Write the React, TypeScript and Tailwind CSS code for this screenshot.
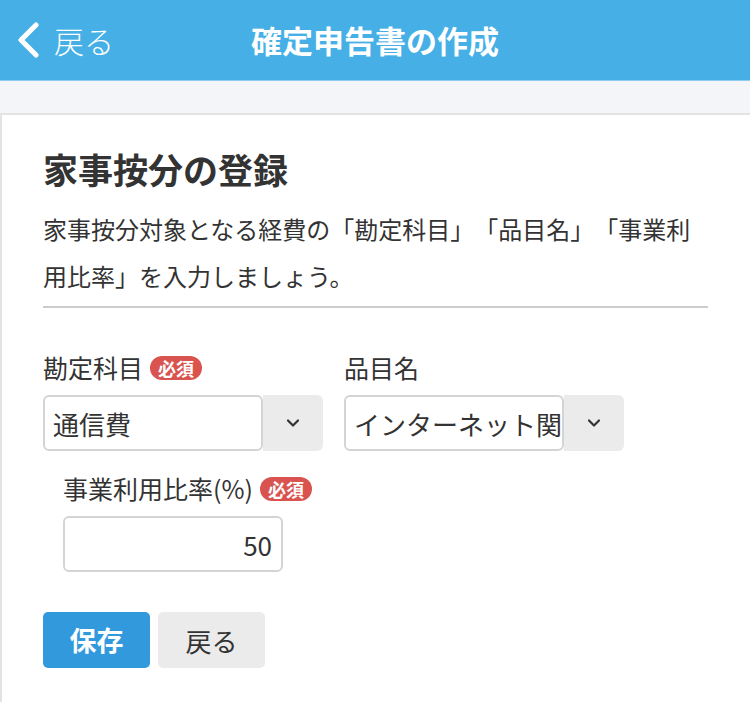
import React from "react";

const Badge: React.FC = () => (
  <span className="ml-[7px] inline-flex h-[24px] items-center rounded-full bg-[#d9534f] px-[8px] text-[18px] font-bold leading-none text-white">
    必須
  </span>
);

const Chevron: React.FC = () => (
  <svg width="16" height="10" viewBox="0 0 16 10" fill="none">
    <path d="M3 2.5 L8 7.5 L13 2.5" stroke="#333" strokeWidth="2.2" strokeLinecap="round" strokeLinejoin="round" />
  </svg>
);

const SelectBox: React.FC<{ value: string }> = ({ value }) => (
  <div className="flex h-[56px] w-[280px]">
    <div className="flex w-[220px] items-center overflow-hidden whitespace-nowrap rounded-[6px] border-2 border-[#d4d4d4] bg-white pl-[8px] text-[26px] text-[#333]">
      {value}
    </div>
    <div className="flex w-[60px] items-center justify-center rounded-r-[6px] bg-[#ebebeb]">
      <Chevron />
    </div>
  </div>
);

export default function App() {
  return (
    <div
      className="min-h-[702px] w-[750px] bg-[#f3f5f8] text-[#333] [text-spacing-trim:space-all]"
      style={{ fontFamily: '"Noto Sans CJK JP", "Noto Sans", sans-serif' }}
    >
      <header className="relative flex h-[81px] items-center justify-center border-b border-[#8cccee] bg-[#46b0e6]">
        <div className="absolute left-[14px] top-0 flex h-full items-center gap-[12px] text-white">
          <svg width="28" height="36" viewBox="0 0 28 36" fill="none">
            <path d="M22 3 L7 18 L22 33" stroke="white" strokeWidth="5" strokeLinecap="round" strokeLinejoin="round" />
          </svg>
          <span className="text-[30px] font-light">戻る</span>
        </div>
        <h1 className="text-[31px] font-bold text-white">確定申告書の作成</h1>
      </header>

      <div className="h-[32px]" />

      <main className="border-l-2 border-t-2 border-[#e3e3e3] bg-white px-[41px] pb-[34px] pt-[30px]">
        <h2 className="text-[35px] font-bold leading-[48px] text-[#333]">家事按分の登録</h2>
        <p className="mt-[12px] w-[665px] text-[24px] leading-[47px] text-[#333]">
          家事按分対象となる経費の「勘定科目」「品目名」「事業利用比率」を入力しましょう。
        </p>
        <div className="mt-[7px] h-[2px] w-[665px] bg-[#cccccc]" />

        <div className="mt-[41px] flex gap-[21px]">
          <div className="flex flex-col">
            <div className="flex h-[38px] items-center text-[25px]">
              勘定科目
              <Badge />
            </div>
            <div className="mt-[8px]">
              <SelectBox value="通信費" />
            </div>
          </div>
          <div className="flex flex-col">
            <div className="flex h-[38px] items-center text-[25px]">品目名</div>
            <div className="mt-[8px]">
              <SelectBox value="インターネット関連" />
            </div>
          </div>
        </div>

        <div className="mt-[18px] pl-[20px]">
          <div className="flex h-[40px] items-center text-[25px]">
            事業利用比率(%)
            <Badge />
          </div>
          <div className="mt-[7px] flex h-[56px] w-[220px] items-center justify-end rounded-[6px] border-2 border-[#d4d4d4] pr-[9px] text-[26px] text-[#333]">
            50
          </div>
        </div>

        <div className="mt-[40px] flex gap-[8px]">
          <button className="h-[56px] w-[107px] rounded-[5px] bg-[#3399dd] text-[27px] font-bold text-white">保存</button>
          <button className="h-[56px] w-[107px] rounded-[5px] bg-[#ebebeb] text-[26px] text-[#333]">戻る</button>
        </div>
      </main>
    </div>
  );
}
